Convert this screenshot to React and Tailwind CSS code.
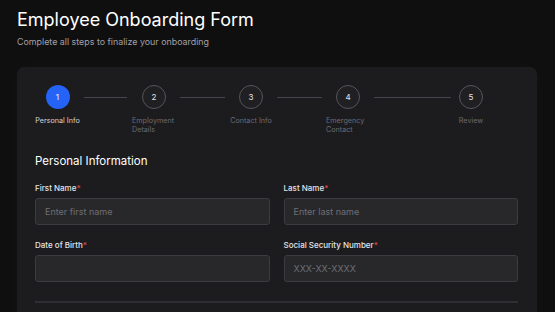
import React from "react";

const steps = [
  { n: 1, label: ["Personal Info"], active: true },
  { n: 2, label: ["Employment", "Details"] },
  { n: 3, label: ["Contact Info"] },
  { n: 4, label: ["Emergency", "Contact"] },
  { n: 5, label: ["Review"] },
];

function Step({ s, w }) {
  return (
    <div className={`flex flex-col items-center ${w}`}>
      <div
        className={
          s.active
            ? "flex h-[24px] w-[24px] items-center justify-center rounded-full bg-[#2463f5] text-[8px] text-white"
            : "flex h-[24px] w-[24px] items-center justify-center rounded-full border border-[#55555c] bg-[#202023] text-[8px] text-[#e4e4e7]"
        }
      >
        {s.n}
      </div>
      <div
        className={`mt-[6.5px] text-[7.2px] leading-[9.5px] ${
          s.active ? "text-[#d4d4d8]" : "text-[#6b6b72]"
        } ${s.label.length > 1 ? "w-[44px] text-left" : "whitespace-nowrap"}`}
      >
        {s.label.map((l, i) => (
          <div key={i}>{l}</div>
        ))}
      </div>
    </div>
  );
}

function Field({ label, placeholder }) {
  return (
    <div className="flex flex-col">
      <div className="text-[8px] leading-[10px] font-medium text-[#e4e4e7]">
        {label}
        <span className="text-[#e5484d]">*</span>
      </div>
      <div className="mt-[5px] flex h-[27px] items-center rounded-[3px] border border-[#3b3b41] bg-[#28282b] px-[9px] text-[9px] text-[#6e6e75]">
        {placeholder}
      </div>
    </div>
  );
}

export default function App() {
  return (
    <div className="min-h-screen bg-[#0f0f10] pl-[17px] pr-[18px] pt-[8px] font-['Inter',sans-serif]">
      <h1 className="text-[18px] leading-[24px] text-white">Employee Onboarding Form</h1>
      <p className="mt-[4px] text-[8.9px] leading-[12px] text-[#a1a1aa]">
        Complete all steps to finalize your onboarding
      </p>
      <div className="mt-[19px] h-[300px] rounded-[7px] bg-[#1c1c1e] pl-[18px] pr-[19px] pt-[18px] shadow-[0_0_24px_rgba(255,255,255,0.025)]">
        <div className="flex items-start pl-[1px]">
          <Step s={steps[0]} w="w-[43px]" />
          <div className="mx-[5px] mt-[11.5px] h-[1.5px] w-[43px] bg-[#45454d]" />
          <Step s={steps[1]} w="w-[44px]" />
          <div className="mx-[4px] mt-[11.5px] h-[1.5px] w-[45px] bg-[#45454d]" />
          <Step s={steps[2]} w="w-[44px]" />
          <div className="mx-[4px] mt-[11.5px] h-[1.5px] w-[45px] bg-[#45454d]" />
          <Step s={steps[3]} w="w-[44px]" />
          <div className="ml-[4px] mr-[4px] mt-[11.5px] h-[1.5px] w-[77px] bg-[#45454d]" />
          <Step s={steps[4]} w="w-[32px]" />
        </div>
        <h2 className="mt-[18.5px] text-[11.5px] leading-[16px] text-white">Personal Information</h2>
        <div className="mt-[14px] grid grid-cols-2 gap-x-[14px] gap-y-[15px]">
          <Field label="First Name" placeholder="Enter first name" />
          <Field label="Last Name" placeholder="Enter last name" />
          <Field label="Date of Birth" placeholder="" />
          <Field label="Social Security Number" placeholder="XXX-XX-XXXX" />
        </div>
        <div className="mt-[19px] h-[2px] bg-[#2f2f33]" />
      </div>
    </div>
  );
}
